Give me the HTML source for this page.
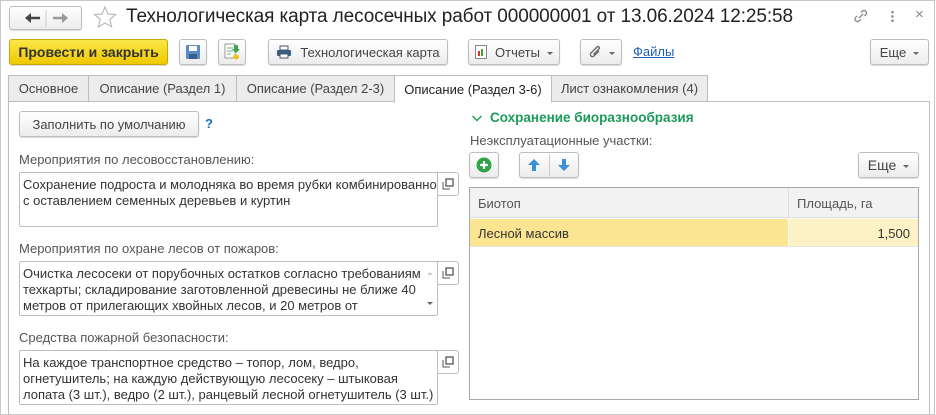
<!DOCTYPE html>
<html><head><meta charset="utf-8"><style>
*{box-sizing:border-box;margin:0;padding:0}
body{width:936px;height:415px;background:#fff;font-family:"Liberation Sans",Arial,sans-serif;font-size:13px;color:#333;position:relative;overflow:hidden}
.a{position:absolute}
.frame{left:0;top:0;width:935px;height:415px;border:1px solid #c8c8c8}
.btn{position:absolute;border:1px solid #bdbdbd;border-radius:3px;background:linear-gradient(#fff,#ececec);box-shadow:0 1px 1px rgba(0,0,0,.15);display:flex;align-items:center;justify-content:center;color:#444;font-size:13px;white-space:nowrap}
.dd{display:inline-block;width:0;height:0;border-left:3px solid transparent;border-right:3px solid transparent;border-top:3px solid #666;margin-left:7px;margin-top:2px}
.tab{position:absolute;top:75px;height:27px;border:1px solid #bdbdbd;background:#ececec;color:#444;display:flex;align-items:center;justify-content:center;font-size:13px}
.lbl{position:absolute;color:#555;font-size:13px}
.ta{position:absolute;border:1px solid #bdbdbd;border-radius:2px;background:#fff;padding:4px 0 0 3px;font-size:13px;line-height:16px;color:#333;overflow:hidden;white-space:nowrap}
.ob{position:absolute;width:22px;height:24px;border:1px solid #bdbdbd;border-radius:0 3px 3px 0;background:#fff;display:flex;align-items:center;justify-content:center}
</style></head><body>
<div class="a frame"></div>
<div class="btn" style="left:9px;top:6px;width:73px;height:24px;justify-content:flex-start">
 <svg width="72" height="22" style="position:absolute;left:0;top:0"><path d="M20 11h10" stroke="#444" stroke-width="2.5"/><path d="M15 11l6-5v10z" fill="#444"/><line x1="36" y1="3" x2="36" y2="20" stroke="#ccc"/><path d="M43 11h10" stroke="#999" stroke-width="2.5"/><path d="M58 11l-6-5v10z" fill="#999"/></svg>
</div>
<svg class="a" style="left:93px;top:5px" width="24" height="24"><path d="M12 2l3 7 7.5.6-5.7 4.9 1.8 7.4L12 18l-6.6 3.9 1.8-7.4L1.5 9.6 9 9z" fill="none" stroke="#bbb" stroke-width="1.2"/></svg>
<div class="a" style="left:126px;top:6px;font-size:19px;color:#222;letter-spacing:-0.1px">Технологическая карта лесосечных работ 000000001 от 13.06.2024 12:25:58</div>
<svg class="a" style="left:853px;top:8px" width="16" height="16"><path d="M6 10l4-4M4 8l-1.5 1.5a2.5 2.5 0 003.5 3.5L8 11.5M8 4.5l1.5-1.5a2.5 2.5 0 013.5 3.5L11.5 8" fill="none" stroke="#888" stroke-width="1.3"/></svg>
<div class="a" style="left:891px;top:10px;width:3px;height:13px;background:radial-gradient(circle,#888 1.2px,transparent 1.4px) 0 0/3px 4.3px"></div>
<div class="a" style="left:915px;top:6px;color:#888;font-size:15px">×</div>

<div class="btn" style="left:9px;top:39px;width:159px;height:26px;background:linear-gradient(#fbe74a,#f0c800);border-color:#c9a900;color:#333;font-weight:bold;font-size:14px">Провести и закрыть</div>
<div class="btn" style="left:179px;top:39px;width:28px;height:26px"><svg width="16" height="16"><rect x="1" y="1" width="14" height="14" rx="1" fill="#5b8cc7"/><rect x="4" y="2" width="8" height="5" fill="#fff"/><rect x="4" y="10" width="8" height="5" fill="#3c5f8a"/></svg></div>
<div class="btn" style="left:218px;top:39px;width:28px;height:26px"><svg width="18" height="18"><rect x="2" y="1" width="10" height="14" fill="#fff" stroke="#999"/><path d="M4 5h6M4 8h6M4 11h4" stroke="#6a8"/><path d="M11 2h4v4h2l-4 4-4-4h2z" fill="#3aa84a"/><ellipse cx="13" cy="14" rx="3" ry="2.5" fill="#f0c020"/></svg></div>
<div class="btn" style="left:268px;top:39px;width:180px;height:26px"><svg width="16" height="14" style="margin-right:8px"><rect x="4" y="1" width="8" height="4" fill="#fff" stroke="#456"/><rect x="1" y="5" width="14" height="6" rx="1" fill="#3a5f85"/><rect x="4" y="9" width="8" height="4" fill="#fff" stroke="#456"/></svg>Технологическая карта</div>
<div class="btn" style="left:468px;top:39px;width:92px;height:26px"><svg width="12" height="14" style="margin-right:8px"><rect x=".5" y=".5" width="11" height="13" fill="#fff" stroke="#888"/><rect x="3" y="6" width="2" height="5" fill="#d33"/><rect x="6" y="4" width="2" height="7" fill="#3a3"/></svg>Отчеты<span class="dd"></span></div>
<div class="btn" style="left:580px;top:39px;width:42px;height:26px"><svg width="14" height="14"><path d="M11 6l-5 5a2 2 0 01-3-3l6-6a1.3 1.3 0 012 2l-5.5 5.5" fill="none" stroke="#666" stroke-width="1.3"/></svg><span class="dd"></span></div>
<div class="a" style="left:633px;top:44px;color:#1d5fb8;text-decoration:underline">Файлы</div>
<div class="btn" style="left:870px;top:39px;width:59px;height:26px">Еще<span class="dd"></span></div>

<div class="a" style="left:8px;top:101px;width:922px;height:313px;border:1px solid #bdbdbd;border-bottom:none"></div>
<div class="tab" style="left:8px;width:81px">Основное</div>
<div class="tab" style="left:88px;width:149px">Описание (Раздел 1)</div>
<div class="tab" style="left:236px;width:159px">Описание (Раздел 2-3)</div>
<div class="tab" style="left:394px;width:158px;background:#fff;border-bottom-color:#fff;color:#222;height:28px">Описание (Раздел 3-6)</div>
<div class="tab" style="left:551px;width:157px">Лист ознакомления (4)</div>

<div class="btn" style="left:19px;top:111px;width:180px;height:26px;font-size:13px">Заполнить по умолчанию</div>
<div class="a" style="left:205px;top:116px;color:#1d6fc8;font-weight:bold">?</div>

<div class="lbl" style="left:19px;top:152px">Мероприятия по лесовосстановлению:</div>
<div class="ta" style="left:19px;top:172px;width:419px;height:55px">Сохранение подроста и молодняка во время рубки комбинированно<br>с оставлением семенных деревьев и куртин</div>
<div class="ob" style="left:437px;top:172px"><svg width="12" height="12"><path d="M1 4v7h7" fill="none" stroke="#555"/><rect x="4" y="1" width="7" height="7" fill="none" stroke="#555" stroke-width="1.3"/></svg></div>

<div class="lbl" style="left:19px;top:241px">Мероприятия по охране лесов от пожаров:</div>
<div class="ta" style="left:19px;top:261px;width:419px;height:55px">Очистка лесосеки от порубочных остатков согласно требованиям<br>техкарты; складирование заготовленной древесины не ближе 40<br>метров от прилегающих хвойных лесов, и 20 метров от</div>
<div class="a" style="left:427px;top:269px;border:3px solid transparent;border-bottom:3px solid #ccc"></div>
<div class="a" style="left:427px;top:302px;border:3px solid transparent;border-top:3px solid #666"></div>
<div class="ob" style="left:437px;top:261px"><svg width="12" height="12"><path d="M1 4v7h7" fill="none" stroke="#555"/><rect x="4" y="1" width="7" height="7" fill="none" stroke="#555" stroke-width="1.3"/></svg></div>

<div class="lbl" style="left:19px;top:330px">Средства пожарной безопасности:</div>
<div class="ta" style="left:19px;top:350px;width:419px;height:55px">На каждое транспортное средство – топор, лом, ведро,<br>огнетушитель; на каждую действующую лесосеку – штыковая<br>лопата (3 шт.), ведро (2 шт.), ранцевый лесной огнетушитель (3 шт.)</div>
<div class="ob" style="left:437px;top:350px"><svg width="12" height="12"><path d="M1 4v7h7" fill="none" stroke="#555"/><rect x="4" y="1" width="7" height="7" fill="none" stroke="#555" stroke-width="1.3"/></svg></div>

<svg class="a" style="left:471px;top:113px" width="12" height="10"><path d="M1.5 3l4.5 4.5L10.5 3" fill="none" stroke="#1c9a5a" stroke-width="1.4"/></svg>
<div class="a" style="left:490px;top:110px;color:#1c9a5a;font-weight:bold;font-size:13.5px">Сохранение биоразнообразия</div>
<div class="lbl" style="left:470px;top:133px">Неэксплуатационные участки:</div>
<div class="btn" style="left:469px;top:152px;width:30px;height:26px"><svg width="16" height="16"><circle cx="8" cy="8" r="7.5" fill="#2ea444"/><path d="M8 4v8M4 8h8" stroke="#fff" stroke-width="2.2"/></svg></div>
<div class="btn" style="left:519px;top:152px;width:60px;height:26px"><svg width="58" height="24" style="position:absolute;left:0;top:0"><path d="M14 6l-6 6h4v6h4v-6h4z" fill="#3d8fd8"/><line x1="29.5" y1="1" x2="29.5" y2="23" stroke="#ccc"/><path d="M44 18l-6-6h4V6h4v6h4z" fill="#3d8fd8"/></svg></div>
<div class="btn" style="left:858px;top:152px;width:61px;height:26px;font-size:14px">Еще<span class="dd"></span></div>

<div class="a" style="left:469px;top:187px;width:450px;height:213px;border:1px solid #a8a8a8"></div>
<div class="a" style="left:470px;top:188px;width:448px;height:30px;background:#f2f2f2;border-bottom:1px solid #ddd"></div>
<div class="a" style="left:788px;top:188px;width:1px;height:30px;background:#ddd"></div>
<div class="lbl" style="left:478px;top:196px">Биотоп</div>
<div class="lbl" style="left:797px;top:196px">Площадь, га</div>
<div class="a" style="left:470px;top:219px;width:318px;height:27px;background:#fbe590"></div>
<div class="a" style="left:789px;top:219px;width:129px;height:27px;background:#fdf2c6"></div>
<div class="a" style="left:470px;top:246px;width:448px;height:1px;background:#e4e4e4"></div>
<div class="a" style="left:478px;top:226px;color:#333">Лесной массив</div>
<div class="a" style="left:860px;top:226px;width:50px;text-align:right;color:#333">1,500</div>
</body></html>
